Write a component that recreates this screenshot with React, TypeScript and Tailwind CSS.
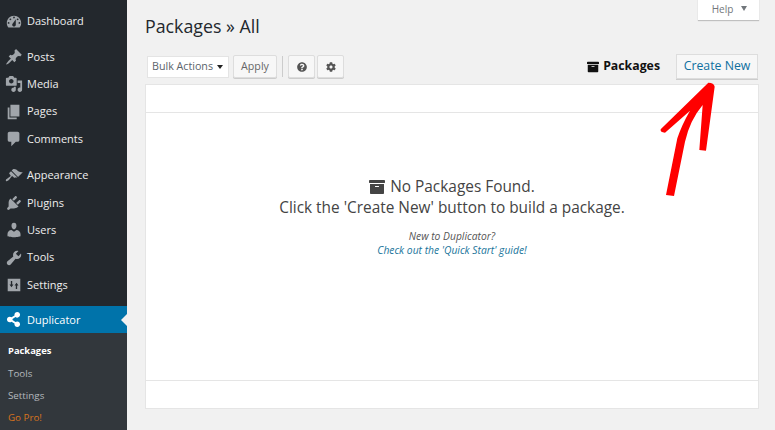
import React from "react";
import { FaArchive, FaCog, FaQuestionCircle, FaShareAlt } from "react-icons/fa";

function Dash({ d }: { d: string }) {
  return (
    <svg viewBox="0 0 20 20" className="w-[18px] h-[18px]" fill="currentColor">
      <path d={d} />
    </svg>
  );
}

function SettingsIcon() {
  return (
    <svg viewBox="0 0 20 20" className="w-[18px] h-[18px]" fill="currentColor">
      <path fillRule="evenodd" d="M3 3h14v14H3zM6.500 5.500v4H5l2.200 3 2.200-3H8v-4zM12 14.500h1.500v-4H15l-2.200-3-2.200 3H12z" />
    </svg>
  );
}

type Item = { label: string; icon: React.ReactNode; gap?: string };

const items: Item[] = [
  { label: "Dashboard", icon: <Dash d="M3.760 16h12.480c1.100-1.370 1.760-3.110 1.760-5 0-4.420-3.580-8-8-8s-8 3.580-8 8c0 1.890.66 3.630 1.760 5zM10 4c.55 0 1 .45 1 1s-.45 1-1 1-1-.45-1-1 .45-1 1-1zM6 6c.55 0 1 .45 1 1s-.45 1-1 1-1-.45-1-1 .45-1 1-1zm8 0c.55 0 1 .45 1 1s-.45 1-1 1-1-.45-1-1 .45-1 1-1zm-5.370 5.550L12 7v6c0 1.100-.9 2-2 2s-2-.9-2-2c0-.57.24-1.080.63-1.450zM4 10c.55 0 1 .45 1 1s-.45 1-1 1-1-.45-1-1 .45-1 1-1zm12 0c.55 0 1 .45 1 1s-.45 1-1 1-1-.45-1-1 .45-1 1-1z" /> },
  { label: "Posts", gap: "mt-[8px]", icon: <Dash d="M10.440 3.020l1.820-1.820 6.360 6.350-1.830 1.820c-1.050-.68-2.480-.57-3.410.36l-.75.75c-.92.93-1.040 2.350-.35 3.410l-1.830 1.820-2.410-2.410-2.800 2.790c-.42.42-3.380 2.710-3.800 2.290s1.860-3.390 2.280-3.810l2.790-2.790L4.100 9.360l1.830-1.820c1.050.69 2.480.57 3.400-.36l.75-.75c.93-.92 1.050-2.350.36-3.410z" /> },
  { label: "Media", icon: <Dash d="M13 11V4c0-.55-.45-1-1-1h-1.670L9 1H5L3.670 3H2c-.55 0-1 .45-1 1v7c0 .55.45 1 1 1h10c.55 0 1-.45 1-1zM7 4.500c1.380 0 2.500 1.120 2.500 2.500S8.380 9.500 7 9.500 4.500 8.380 4.500 7 5.620 4.500 7 4.500zM14 6h5v10.500c0 1.380-1.120 2.500-2.500 2.500S14 17.880 14 16.500s1.120-2.500 2.500-2.500c.17 0 .34.02.5.05V9h-3V6zm-4 8.050V13h2v3.500c0 1.380-1.120 2.500-2.500 2.500S7 17.880 7 16.500 8.120 14 9.500 14c.17 0 .34.02.5.05z" /> },
  { label: "Pages", icon: <Dash d="M6 15V2h10v13H6zm-1 1h8v2H3V5h2v11z" /> },
  { label: "Comments", icon: <Dash d="M5 2h9c1.100 0 2 .9 2 2v7c0 1.100-.9 2-2 2h-2l-5 5v-5H5c-1.100 0-2-.9-2-2V4c0-1.100.9-2 2-2z" /> },
  { label: "Appearance", gap: "mt-[9.5px]", icon: <Dash d="M14.480 11.060L7.410 3.990l1.500-1.500c.5-.56 2.300-.47 3.510.32 1.210.8 1.430 1.280 2.910 2.100 1.180.64 2.450 1.260 4.450.85zm-.71.71L6.700 4.700 4.930 6.470c-.39.39-.39 1.020 0 1.410l1.060 1.060c.39.39.39 1.030 0 1.420-.6.6-1.430 1.110-2.210 1.690-.35.26-.7.53-1.010.84C1.430 13.230.4 14.850 1.100 15.550c.7.7 2.320-.33 3.670-1.670.31-.31.58-.66.84-1.010.58-.78 1.090-1.610 1.690-2.210.39-.39 1.030-.39 1.420 0l1.060 1.060c.39.39 1.020.39 1.410 0z" /> },
  { label: "Plugins", icon: <Dash d="M13.110 4.360L9.870 7.600 8 5.730l3.240-3.240c.35-.34 1.050-.2 1.560.32.52.51.66 1.210.31 1.550zm-8 1.770l.91-1.120 9.010 9.010-1.190.84c-.71.71-2.630 1.160-3.820 1.160H6.140L4.900 17.260c-.59.59-1.540.59-2.120 0-.59-.58-.59-1.530 0-2.120l1.240-1.240v-3.880c0-1.130.4-3.190 1.090-3.890zm7.260 3.970l3.240-3.240c.34-.35 1.040-.21 1.550.31.52.51.66 1.210.31 1.550l-3.240 3.250z" /> },
  { label: "Users", icon: <Dash d="M10 9.250c-2.270 0-2.730-3.440-2.730-3.440C7 4.020 7.820 2 9.970 2c2.160 0 2.980 2.020 2.710 3.810 0 0-.41 3.440-2.680 3.440zm0 2.570L12.720 10c2.390 0 4.520 2.330 4.520 4.530v2.490s-3.650 1.130-7.240 1.130c-3.650 0-7.240-1.130-7.240-1.130v-2.490c0-2.250 1.940-4.480 4.470-4.480z" /> },
  { label: "Tools", icon: <Dash d="M16.680 9.770c-1.340 1.340-3.300 1.670-4.950.99l-5.410 6.520c-.99.99-2.590.99-3.580 0s-.99-2.590 0-3.570l6.520-5.420c-.68-1.650-.35-3.610.99-4.950 1.280-1.280 3.120-1.620 4.720-1.060l-2.890 2.890 2.820 2.820 2.860-2.870c.53 1.580.18 3.390-1.080 4.650z" /> },
  { label: "Settings", icon: <SettingsIcon /> },
];

function Sidebar() {
  return (
    <aside className="w-[127px] shrink-0 bg-[#23282d] pt-[8px] text-[11px] h-full flex flex-col">
      {items.map((it) => (
        <div key={it.label} className={`flex items-center h-[27.3px] text-[#eeeeee] ${it.gap ?? ""}`}>
          <span className="w-[27px] pl-[5px] flex justify-start text-[#a0a5aa]">{it.icon}</span>
          <span>{it.label}</span>
        </div>
      ))}
      <div className="relative flex items-center h-[27px] mt-[7.5px] pt-[1px] bg-[#0073aa] text-white">
        <span className="w-[27px] pl-[6px] flex"><FaShareAlt size={15} /></span>
        <span>Duplicator</span>
        <span className="absolute right-0 top-[8px] border-y-[6px] border-r-[6px] border-y-transparent border-r-[#f1f1f1]" />
      </div>
      <div className="flex-1 bg-[#32373c] pt-[7px] pl-[8px] text-[9.8px] text-[#b4b9be]">
        <div className="h-[22px] flex items-center font-bold text-white text-[9.4px]">Packages</div>
        <div className="h-[22px] flex items-center pt-[2px]">Tools</div>
        <div className="h-[22px] flex items-center pt-[2px]">Settings</div>
        <div className="h-[22px] flex items-center pt-[2px] text-[#d9741c]">Go Pro!</div>
      </div>
    </aside>
  );
}

const btn = "h-[23px] flex items-center justify-center bg-[#f7f7f7] border border-[#dddddd] rounded-[2px] text-[#666666] shadow-[0_1px_0_#cccccc]";

export default function App() {
  return (
    <div className="relative flex w-[775px] h-[430px] overflow-hidden bg-[#f1f1f1] font-['Open_Sans','Noto_Sans',sans-serif]">
      <Sidebar />
      <main className="flex-1 pl-[18px] pr-[16px] flex flex-col">
        <div className="relative h-[16px]">
          <div className="absolute right-0 top-[-1px] w-[61px] h-[21px] bg-white flex items-center justify-center gap-[8px] pl-[2px] text-[10px] text-[#72777c] shadow-[0_1px_1px_rgba(0,0,0,0.2)]">
            <span>Help</span>
            <span className="border-x-[3.5px] border-t-[5px] border-x-transparent border-t-[#72777c] mb-[2px]" />
          </div>
        </div>
        <h1 className="text-[17.8px] leading-[24px] text-[#23282d] mb-[17px] -mt-[2px]">Packages » All</h1>
        <div className="flex items-center h-[23px] pl-[2px] text-[10.7px] mb-[6px]">
          <div className="w-[82px] h-[22px] bg-white border border-[#e4e4e4] flex items-center justify-between pl-[4px] pr-[5px] text-[#5c646b]">
            <span>Bulk Actions</span>
            <span className="border-x-[3px] border-t-[4px] border-x-transparent border-t-[#222]" />
          </div>
          <div className={`${btn} w-[44px] ml-[4px]`}>Apply</div>
          <div className="w-px h-[21px] bg-[#cccccc] ml-[5px]" />
          <div className={`${btn} w-[27px] ml-[5px]`}><FaQuestionCircle size={10} className="text-[#555]" /></div>
          <div className={`${btn} w-[27px] ml-[2px]`}><FaCog size={10} className="text-[#555]" /></div>
          <div className="ml-auto flex items-center gap-[4px] font-bold text-[12.3px] text-[#111] mr-[16px]">
            <FaArchive size={12} /> Packages
          </div>
          <div className="w-[82px] h-[25px] mr-px flex items-center justify-center bg-[#f7f7f7] border border-[#dddddd] text-[#0f6f9f] text-[12.3px] font-medium shadow-[0_1px_0_#cccccc]">Create New</div>
        </div>
        <section className="w-[614px] h-[325px] bg-white border border-[#e5e5e5] flex flex-col">
          <div className="h-[28px] border-b border-[#e5e5e5]" />
          <div className="flex-1 flex flex-col items-center pt-[63px] text-[#444444]">
            <div className="flex items-center gap-[5px] text-[15.4px] leading-[21px]">
              <FaArchive size={16} className="text-[#444]" /> No Packages Found.
            </div>
            <div className="text-[15.4px] leading-[21px]">Click the 'Create New' button to build a package.</div>
            <div className="italic text-[10.3px] leading-[14px] mt-[11px] text-[#555]">New to Duplicator?</div>
            <div className="italic text-[10.3px] leading-[14px] text-[#21759b]">Check out the 'Quick Start' guide!</div>
          </div>
          <div className="h-[28px] border-t border-[#e5e5e5]" />
        </section>
      </main>
      <svg className="absolute left-[640px] top-[70px] w-[100px] h-[130px]" viewBox="0 0 300 390" fill="#ff0000">
        <path d="M205 38Q222 38 224 50L198 242L178 240L188 105Q150 150 135 215L102 378L78 375L112 205Q125 165 150 122L75 188Q60 188 62 178Z" />
      </svg>
    </div>
  );
}
